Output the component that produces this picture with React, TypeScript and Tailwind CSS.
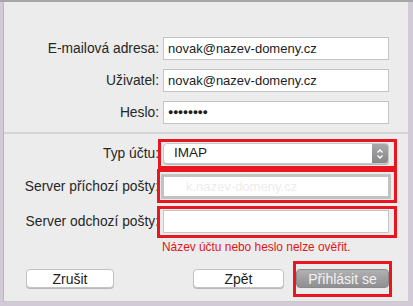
import React from 'react'

const font = { fontFamily: '"Liberation Sans", Arial, sans-serif' }

const Field = ({ label, children }: { label: string; children: React.ReactNode }) => (
  <div className="grid grid-cols-[155px_226px] items-center gap-x-[4px]">
    <div className="text-right text-[13.8px] text-[#262626] leading-none whitespace-nowrap">{label}</div>
    {children}
  </div>
)

const TextInput = ({ value, muted }: { value?: string; muted?: boolean }) => (
  <div className="h-[23px] bg-white border border-[#c4c4c4] flex items-center px-[4px]">
    <span className={muted ? 'text-[13px] text-[#e6e6e6]' : 'text-[13px] text-[#1d1d1d]'}>{value}</span>
  </div>
)

const Mark = ({ className }: { className: string }) => (
  <div className={`absolute border-[3px] border-[#e8161f] pointer-events-none ${className}`} />
)

export default function App() {
  return (
    <div className="w-[413px] h-[306px] bg-[#d3cad8] overflow-hidden" style={font}>
      <div className="h-[2px] bg-[#a6a6a8]" />
      <div className="ml-[3px] w-[405px] h-[300px] bg-[#ececec] border-l border-[#bdb6c2] border-b border-b-[#c9c9c9] relative">
        <div className="pt-[35px] flex flex-col gap-[9px]">
          <Field label="E-mailová adresa:">
            <TextInput value="novak@nazev-domeny.cz" />
          </Field>
          <Field label="Uživatel:">
            <TextInput value="novak@nazev-domeny.cz" />
          </Field>
          <Field label="Heslo:">
            <div className="h-[23px] bg-white border border-[#c4c4c4] flex items-center px-[4px]">
              <span className="text-[9px] tracking-[-0.5px] text-[#1d1d1d]">●●●●●●●●</span>
            </div>
          </Field>
        </div>

        <div className="mt-[8px] h-[2px] bg-[#d4d4d4]" />

        <div className="pt-[9px] flex flex-col">
          <Field label="Typ účtu:">
            <div className="relative">
              <div className="h-[21px] bg-white border border-[#c8c8c8] rounded-[4px] flex items-center overflow-hidden shadow-[0_1px_0_#b8b8b8]">
                <span className="pl-[10px] flex-1 text-[13.5px] text-[#1d1d1d]">IMAP</span>
                <div className="w-[16px] h-full bg-gradient-to-b from-[#a9a9ab] to-[#87878a] flex items-center justify-center">
                  <svg width="8" height="12" viewBox="0 0 8 12" fill="none" stroke="white" strokeWidth="1.3">
                    <path d="M1.5 4.5 L4 2 L6.5 4.5" />
                    <path d="M1.5 7.5 L4 10 L6.5 7.5" />
                  </svg>
                </div>
              </div>
              <Mark className="-left-[5px] -right-[8px] -top-[4px] -bottom-[5px]" />
            </div>
          </Field>
          <div className="mt-[10px]">
            <Field label="Server příchozí pošty:">
              <div className="relative">
                <div className="h-[25px] -mx-[2px] bg-white border-[3px] border-[#c2c2c2] flex items-center pl-[22px]">
                  <span className="text-[13px] text-[#ececec]">k.nazev-domeny.cz</span>
                </div>
                <Mark className="-left-[6px] -right-[8px] -top-[5px] -bottom-[4px]" />
              </div>
            </Field>
          </div>
          <div className="mt-[11px]">
            <Field label="Server odchozí pošty:">
              <div className="relative">
                <TextInput value="" />
                <Mark className="-left-[6px] -right-[8px] -top-[4px] -bottom-[5px]" />
              </div>
            </Field>
          </div>
        </div>

        <div className="ml-[158px] mt-[9px] text-[11.9px] text-[#e0151b] leading-none">
          Název účtu nebo heslo nelze ověřit.
        </div>

        <div className="mt-[13px] flex items-center">
          <button className="ml-[22px] w-[88px] h-[19px] bg-white border border-[#c3c3c3] rounded-[4px] text-[14px] text-[#1d1d1d] leading-none shadow-[0_1px_0_#b9b9b9]">
            Zrušit
          </button>
          <button className="ml-[79px] w-[91px] h-[19px] bg-white border border-[#c3c3c3] rounded-[4px] text-[14px] text-[#1d1d1d] leading-none shadow-[0_1px_0_#b9b9b9]">
            Zpět
          </button>
          <div className="relative ml-[12px]">
            <button className="w-[93px] h-[19px] bg-gradient-to-b from-[#b1b1b3] to-[#8f8f92] rounded-[4px] text-[14px] text-[#f2f2f2] leading-none border border-[#8a8a8c]">
              Přihlásit se
            </button>
            <Mark className="-left-[3px] -right-[3px] -top-[6px] -bottom-[6px]" />
          </div>
        </div>
      </div>
    </div>
  )
}
